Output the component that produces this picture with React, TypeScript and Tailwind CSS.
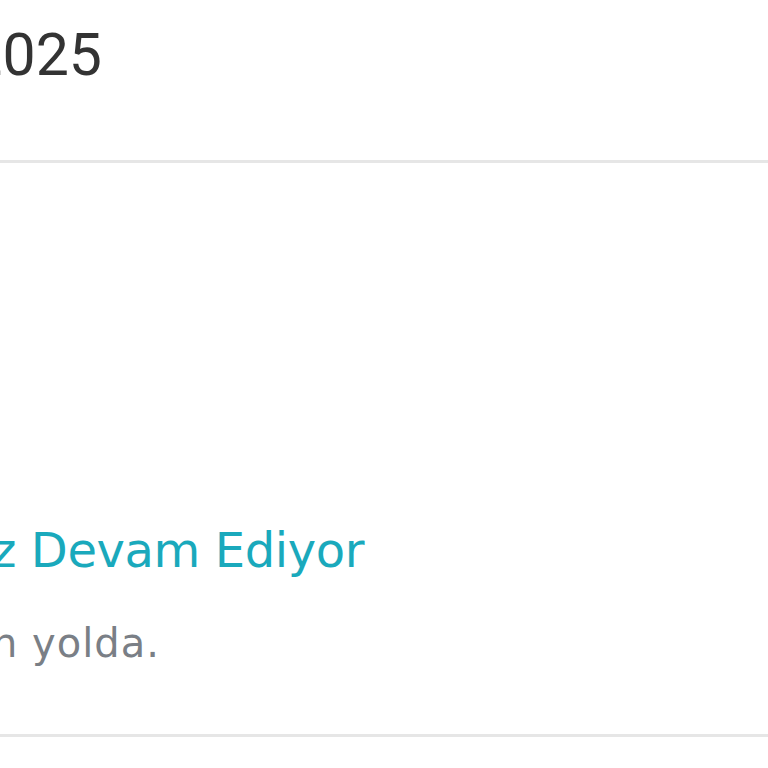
export default function App() {
  return (
    <div className="w-[768px] h-[768px] overflow-hidden bg-white">
      <div className="pt-[25px] pb-[76px] border-b-[3px] border-[#e6e6e6]">
        <div
          className="flex justify-end w-[102px] whitespace-nowrap text-[59px] leading-none text-[#333333]"
          style={{ fontFamily: 'Roboto, "Liberation Sans", sans-serif' }}
        >
          14.03.2025
        </div>
      </div>
      <div className="pt-[363px] pb-[71px] border-b-[3px] border-[#e6e6e6]" style={{ fontFamily: '"DejaVu Sans", sans-serif' }}>
        <div className="flex justify-end w-[364px] whitespace-nowrap text-[48px] leading-none tracking-[-0.4px] text-[#1aa9bc]">
          Siparişiniz Devam Ediyor
        </div>
        <div className="mt-[49px] flex justify-end w-[160px] whitespace-nowrap text-[40px] leading-none tracking-[1px] text-[#7a7f86]">
          Siparişiniz teslimat için yolda.
        </div>
      </div>
    </div>
  );
}
